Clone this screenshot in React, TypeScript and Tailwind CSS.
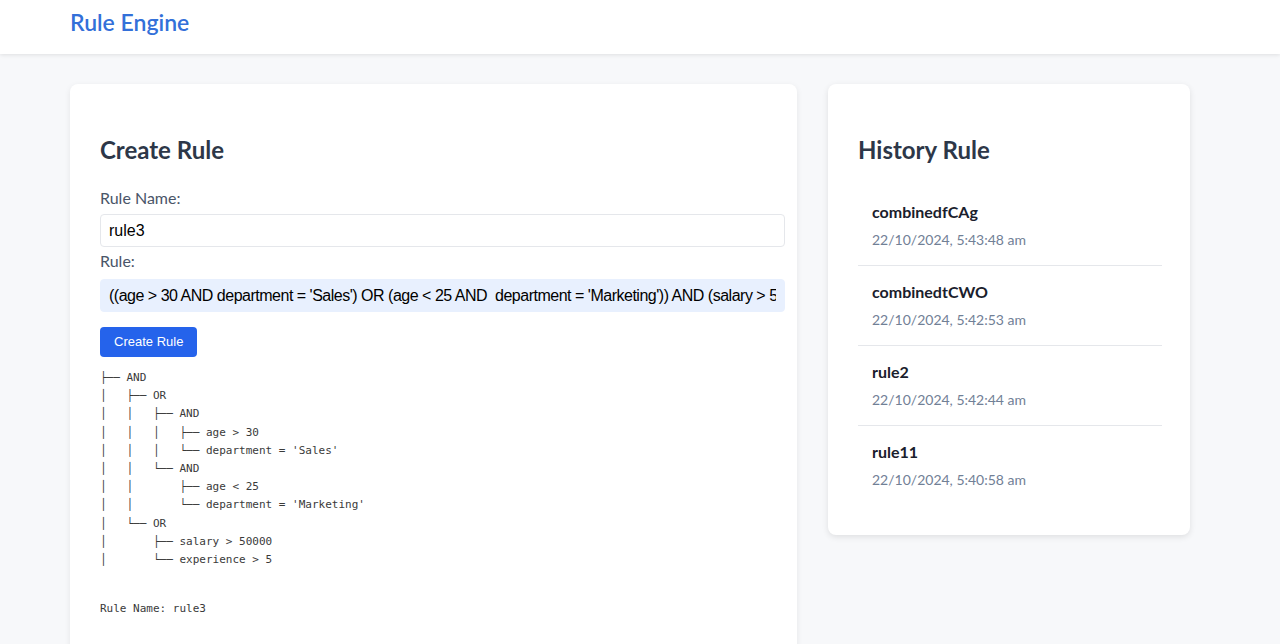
import { useState } from "react";

const history = [
  { name: "combinedfCAg", date: "22/10/2024, 5:43:48 am" },
  { name: "combinedtCWO", date: "22/10/2024, 5:42:53 am" },
  { name: "rule2", date: "22/10/2024, 5:42:44 am" },
  { name: "rule11", date: "22/10/2024, 5:40:58 am" },
];

const tree = `├── AND
│   ├── OR
│   │   ├── AND
│   │   │   ├── age > 30
│   │   │   └── department = 'Sales'
│   │   └── AND
│   │       ├── age < 25
│   │       └── department = 'Marketing'
│   └── OR
│       ├── salary > 50000
│       └── experience > 5`;

function App() {
  const [ruleName, setRuleName] = useState<string>("rule3");
  const [rule, setRule] = useState<string>(
    "((age > 30 AND department = 'Sales') OR (age < 25 AND  department = 'Marketing')) AND (salary > 50000 OR experience > 5)"
  );

  return (
    <div className="min-h-screen bg-[#f7f8fa] font-['Lato',sans-serif]">
      <header className="h-[54px] bg-white shadow-[0_1px_4px_rgba(0,0,0,0.1)]">
        <div className="mx-[70px] pt-[8px]">
          <h1 className="text-[23px] leading-[28px] font-semibold text-[#3370d9]">Rule Engine</h1>
        </div>
      </header>

      <main className="mx-[70px] mt-[30px] grid grid-cols-[727px_362px] gap-[31px] items-start">
        <section className="rounded-lg bg-white p-[30px] pb-10 shadow-[0_2px_6px_rgba(0,0,0,0.08)]">
          <h2 className="my-5 text-2xl leading-8 font-bold text-[#2d3748]">Create Rule</h2>
          <label className="block text-base leading-6 text-[#4a5568]">Rule Name:</label>
          <input
            type="text"
            value={ruleName}
            onChange={(e) => setRuleName(e.target.value)}
            className="box-content w-full mt-[4px] px-2 py-[6px] border border-[#e5e7eb] rounded text-base leading-[19px] text-black font-['Liberation_Sans',sans-serif] focus:outline-none"
          />
          <label className="mt-[2px] block text-base leading-6 text-[#4a5568]">Rule:</label>
          <input
            type="text"
            value={rule}
            onChange={(e) => setRule(e.target.value)}
            className="box-content w-full mt-[6px] px-2 py-[6px] border border-[#e8f0fe] bg-[#e8f0fe] rounded text-base leading-[19px] text-black font-['Liberation_Sans',sans-serif] tracking-[-0.49px] focus:outline-none"
          />
          <button className="mt-[15px] h-[30px] px-[14px] rounded bg-[#2563eb] text-[13px] text-white font-['Liberation_Sans',sans-serif]">
            Create Rule
          </button>
          <pre className="mt-[12px] text-[11px] leading-[18.2px] text-[#3a3a3a] font-['DejaVu_Sans_Mono',monospace]">{tree}</pre>
          <p className="mt-[31px] text-[11px] leading-[18px] text-[#3a3a3a] font-['DejaVu_Sans_Mono',monospace]">Rule Name: rule3</p>
        </section>

        <section className="rounded-lg bg-white p-[30px] shadow-[0_2px_6px_rgba(0,0,0,0.1)]">
          <h2 className="my-5 text-2xl leading-8 font-bold text-[#2d3748]">History Rule</h2>
          <ul className="-mr-[2px]">
            {history.map((item, i) => (
              <li
                key={item.name}
                className={`px-[14px] py-[15px] ${i < history.length - 1 ? "border-b border-[#e5e7eb]" : ""}`}
              >
                <div className="text-base leading-[22px] font-bold text-[#1a202c]">{item.name}</div>
                <div className="mt-[6px] text-sm leading-[21px] text-[#718096]">{item.date}</div>
              </li>
            ))}
          </ul>
        </section>
      </main>
    </div>
  );
}

export default App;
